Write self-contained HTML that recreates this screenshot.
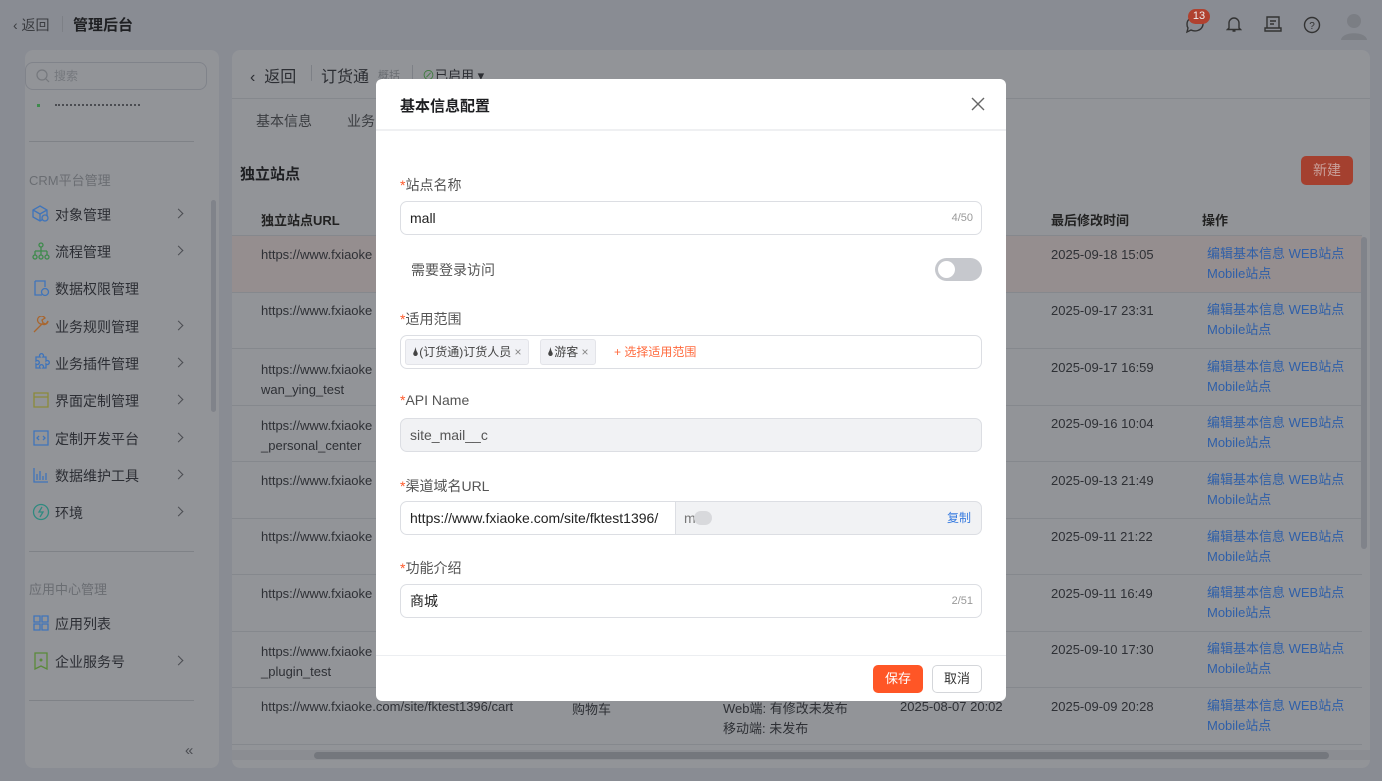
<!DOCTYPE html>
<html><head><meta charset="utf-8"><style>
*{box-sizing:border-box;margin:0;padding:0}
body{width:1382px;height:781px;overflow:hidden;background:#898c93;font-family:"Liberation Sans","Noto Sans CJK SC",sans-serif;position:relative;color:#2b2d31}
.a{position:absolute;white-space:nowrap}
.side{left:25px;top:50px;width:194px;height:718px;background:#929498;border-radius:8px}
.main{left:232px;top:50px;width:1138px;height:718px;background:#929498;border-radius:8px;overflow:hidden}
.mi{font-size:14px;color:#2c2e34}
.chev{width:7px;height:7px;border-top:1.5px solid #4b4d52;border-right:1.5px solid #4b4d52;transform:rotate(45deg)}
.row{left:0;width:1130px;border-top:1px solid #85888d;height:57px}
.t{font-size:13px;color:#2e3035}
.op{font-size:13px;color:#2f5fa8;line-height:20px}
.modal{left:376px;top:79px;width:630px;height:622px;background:#fff;border-radius:6px;overflow:hidden}
.lbl{font-size:14px;color:#555}
.lbl b{color:#ff5a2b;font-weight:normal}
.inp{left:24px;width:582px;height:34px;border:1px solid #dcdee3;border-radius:7px;font-size:14px;color:#222;padding:0 9px;line-height:32px}
</style></head><body>
<!-- top bar -->
<div class="a" style="left:13px;top:15px;font-size:14px;color:#3a3c40">‹ 返回</div>
<div class="a" style="left:62px;top:16px;width:1px;height:16px;background:#7d8086"></div>
<div class="a" style="left:73px;top:14px;font-size:15px;font-weight:bold;color:#1e1f22">管理后台</div>
<svg class="a" style="left:1184px;top:14px" width="22" height="20"><path d="M3 10a8 7 0 1 1 4 6l-4 2 1-4a7 7 0 0 1-1-4z" fill="none" stroke="#333" stroke-width="1.4"/></svg>
<div class="a" style="left:1188px;top:9px;width:22px;height:15px;border-radius:8px;background:#b0412f;color:#eee;font-size:11px;text-align:center;line-height:15px">13</div>
<svg class="a" style="left:1226px;top:15px" width="16" height="18"><path d="M3 13V8a5 5 0 0 1 10 0v5l1.5 1.5h-13zM6.5 16h3" fill="none" stroke="#333" stroke-width="1.4"/></svg>
<svg class="a" style="left:1264px;top:15px" width="18" height="18"><path d="M3 2h12v11H3zM6 6h6M6 9h4M1 13h16v3H1z" fill="none" stroke="#333" stroke-width="1.4"/></svg>
<svg class="a" style="left:1303px;top:16px" width="18" height="18"><circle cx="9" cy="9" r="7.5" fill="none" stroke="#333" stroke-width="1.4"/><text x="9" y="13" font-size="10" text-anchor="middle" fill="#333" font-family="Liberation Sans">?</text></svg>
<svg class="a" style="left:1338px;top:10px" width="32" height="32"><circle cx="16" cy="11" r="7" fill="#7b7e84"/><path d="M3 30c1-9 25-9 26 0z" fill="#7b7e84"/></svg>

<!-- sidebar -->
<div class="a side">
 <div class="a" style="left:0;top:12px;width:182px;height:28px;border:1px solid #80838a;border-radius:8px;font-size:12px;color:#75787d;line-height:26px;padding-left:28px">搜索</div>
 <svg class="a" style="left:11px;top:19px" width="14" height="14"><circle cx="6" cy="6" r="5" fill="none" stroke="#75787d" stroke-width="1.2"/><path d="M10 10l3 3" stroke="#75787d" stroke-width="1.2"/></svg>
 <div class="a" style="left:12px;top:54px;width:3px;height:3px;background:#3e8a4c"></div>
 <div class="a" style="left:30px;top:54px;width:85px;height:2px;border-top:2px dotted #4b4d52"></div>
 <div class="a" style="left:4px;top:91px;width:165px;height:1px;background:#7f8287"></div>
 <div class="a" style="left:4px;top:120px;font-size:13px;color:#6a6d72">CRM平台管理</div>
 <svg class="a" style="left:7px;top:155px" width="18" height="18"><path d="M8 1l7 4v7l-7 4-7-4V5zM1 5l7 4 7-4M8 9v7" fill="none" stroke="#3f74ba" stroke-width="1.3"/><circle cx="13" cy="13" r="3" fill="#929498" stroke="#3f74ba" stroke-width="1.3"/></svg><div class="a mi" style="left:30px;top:155px">对象管理</div><div class="a chev" style="left:150px;top:160px"></div>
 <svg class="a" style="left:7px;top:192px" width="18" height="18"><circle cx="9" cy="3" r="2" fill="none" stroke="#3e8a4c" stroke-width="1.3"/><path d="M9 5v4M3 9h12M3 9v4M9 9v4M15 9v4" fill="none" stroke="#3e8a4c" stroke-width="1.3"/><circle cx="3" cy="15" r="2" fill="none" stroke="#3e8a4c" stroke-width="1.3"/><circle cx="9" cy="15" r="2" fill="none" stroke="#3e8a4c" stroke-width="1.3"/><circle cx="15" cy="15" r="2" fill="none" stroke="#3e8a4c" stroke-width="1.3"/></svg><div class="a mi" style="left:30px;top:192px">流程管理</div><div class="a chev" style="left:150px;top:197px"></div>
 <svg class="a" style="left:7px;top:229px" width="18" height="18"><path d="M3 2h10v6M3 2v14h7" fill="none" stroke="#3f74ba" stroke-width="1.3"/><circle cx="13" cy="13" r="3.5" fill="none" stroke="#3f74ba" stroke-width="1.3"/></svg><div class="a mi" style="left:30px;top:229px">数据权限管理</div>
 <svg class="a" style="left:7px;top:266px" width="18" height="18"><path d="M2 16l8-8a4 4 0 1 1 3-6l-3 2 1 3 3 1 2-3a4 4 0 0 1-6 3" fill="none" stroke="#a8662f" stroke-width="1.3"/></svg><div class="a mi" style="left:30px;top:267px">业务规则管理</div><div class="a chev" style="left:150px;top:272px"></div>
 <svg class="a" style="left:7px;top:303px" width="18" height="18"><path d="M4 4h4a2 2 0 1 1 3 0h3v4a2 2 0 1 1 0 3v4H11a2 2 0 1 0-3 0H4v-4a2 2 0 1 0 0-3z" fill="none" stroke="#3f74ba" stroke-width="1.3"/></svg><div class="a mi" style="left:30px;top:304px">业务插件管理</div><div class="a chev" style="left:150px;top:309px"></div>
 <svg class="a" style="left:7px;top:341px" width="18" height="18"><path d="M2 2h14v14H2zM2 6h14" fill="none" stroke="#8b8a3a" stroke-width="1.3"/></svg><div class="a mi" style="left:30px;top:341px">界面定制管理</div><div class="a chev" style="left:150px;top:346px"></div>
 <svg class="a" style="left:7px;top:379px" width="18" height="18"><path d="M2 2h14v14H2zM7 7l-2 2 2 2M11 7l2 2-2 2" fill="none" stroke="#3f74ba" stroke-width="1.3"/></svg><div class="a mi" style="left:30px;top:379px">定制开发平台</div><div class="a chev" style="left:150px;top:384px"></div>
 <svg class="a" style="left:7px;top:416px" width="18" height="18"><path d="M2 2v14h14M5 8v6M8 5v9M11 10v4M14 7v7" fill="none" stroke="#3f74ba" stroke-width="1.3"/></svg><div class="a mi" style="left:30px;top:416px">数据维护工具</div><div class="a chev" style="left:150px;top:421px"></div>
 <svg class="a" style="left:7px;top:453px" width="18" height="18"><circle cx="9" cy="9" r="7.5" fill="none" stroke="#2f8a80" stroke-width="1.3"/><path d="M10 4l-3 5h4l-3 5" fill="none" stroke="#2f8a80" stroke-width="1.3"/></svg><div class="a mi" style="left:30px;top:453px">环境</div><div class="a chev" style="left:150px;top:458px"></div>
 <div class="a" style="left:4px;top:501px;width:165px;height:1px;background:#7f8287"></div>
 <div class="a" style="left:4px;top:529px;font-size:13px;color:#6a6d72">应用中心管理</div>
 <svg class="a" style="left:8px;top:565px" width="16" height="16"><path d="M1 1h6v6H1zM9 1h6v6H9zM1 9h6v6H1zM9 9h6v6H9z" fill="none" stroke="#3f74ba" stroke-width="1.3"/></svg><div class="a mi" style="left:30px;top:564px">应用列表</div>
 <svg class="a" style="left:8px;top:602px" width="16" height="18"><path d="M2 1h12v16l-6-3-6 3z" fill="none" stroke="#5a8a3a" stroke-width="1.3"/><circle cx="8" cy="8" r="1.5" fill="#5a8a3a"/></svg><div class="a mi" style="left:30px;top:602px">企业服务号</div><div class="a chev" style="left:150px;top:607px"></div>
 <div class="a" style="left:4px;top:650px;width:165px;height:1px;background:#7f8287"></div>
 <div class="a" style="left:160px;top:692px;font-size:15px;color:#4b4d52">«</div>
 <div class="a" style="left:186px;top:150px;width:5px;height:212px;background:#80838a;border-radius:3px"></div>
</div>

<!-- main -->
<div class="a main">
 <div class="a" style="left:18px;top:13px;font-size:16px;color:#2c2e33">‹&nbsp; 返回</div>
 <div class="a" style="left:79px;top:15px;width:1px;height:16px;background:#7d8086"></div>
 <div class="a" style="left:89px;top:13px;font-size:16px;color:#2c2e33">订货通</div>
 <div class="a" style="left:146px;top:17px;font-size:11px;color:#6a6d72">概括</div>
 <div class="a" style="left:180px;top:15px;width:1px;height:16px;background:#7d8086"></div>
 <div class="a" style="left:190px;top:15px;font-size:13px;color:#2c2e33"><span style="color:#3e7a3e">⊘</span>已启用 ▾</div>
 <div class="a" style="left:0;top:48px;width:1138px;height:1px;background:#85888d"></div>
 <div class="a" style="left:24px;top:61px;font-size:14px;color:#3a3c40">基本信息</div>
 <div class="a" style="left:115px;top:61px;font-size:14px;color:#3a3c40">业务</div>
 <div class="a" style="left:8px;top:113px;font-size:15px;font-weight:bold;color:#1e1f22">独立站点</div>
 <div class="a" style="left:1069px;top:106px;width:52px;height:29px;background:#a4402f;border-radius:5px;color:#c9a09a;font-size:14px;text-align:center;line-height:29px">新建</div>
 <div class="a" style="left:29px;top:160px;font-size:13px;font-weight:bold;color:#222">独立站点URL</div>
 <div class="a" style="left:819px;top:160px;font-size:13px;font-weight:bold;color:#222">最后修改时间</div>
 <div class="a" style="left:970px;top:160px;font-size:13px;font-weight:bold;color:#222">操作</div>
 <div class="a row" style="top:185px;background:#958e8f"></div>
 <div class="a row" style="top:242px"></div><div class="a row" style="top:298px"></div><div class="a row" style="top:355px"></div><div class="a row" style="top:411px"></div><div class="a row" style="top:468px"></div><div class="a row" style="top:524px"></div><div class="a row" style="top:581px"></div><div class="a row" style="top:637px"></div><div class="a row" style="top:694px"></div>
 <div class="a t" style="left:29px;top:197px">https://www.fxiaoke</div>
 <div class="a t" style="left:29px;top:253px">https://www.fxiaoke</div>
 <div class="a t" style="left:29px;top:310px;line-height:20px">https://www.fxiaoke<br>wan_ying_test</div>
 <div class="a t" style="left:29px;top:366px;line-height:20px">https://www.fxiaoke<br>_personal_center</div>
 <div class="a t" style="left:29px;top:423px">https://www.fxiaoke</div>
 <div class="a t" style="left:29px;top:479px">https://www.fxiaoke</div>
 <div class="a t" style="left:29px;top:536px">https://www.fxiaoke</div>
 <div class="a t" style="left:29px;top:592px;line-height:20px">https://www.fxiaoke<br>_plugin_test</div>
 <div class="a t" style="left:29px;top:649px">https://www.fxiaoke.com/site/fktest1396/cart</div>
 <div class="a t" style="left:340px;top:649px">购物车</div>
 <div class="a t" style="left:491px;top:649px;line-height:20px">Web端: 有修改未发布<br>移动端: 未发布</div>
 <div class="a t" style="left:668px;top:649px">2025-08-07 20:02</div>
 <div class="a t" style="left:819px;top:197px">2025-09-18 15:05</div>
 <div class="a t" style="left:819px;top:253px">2025-09-17 23:31</div>
 <div class="a t" style="left:819px;top:310px">2025-09-17 16:59</div>
 <div class="a t" style="left:819px;top:366px">2025-09-16 10:04</div>
 <div class="a t" style="left:819px;top:423px">2025-09-13 21:49</div>
 <div class="a t" style="left:819px;top:479px">2025-09-11 21:22</div>
 <div class="a t" style="left:819px;top:536px">2025-09-11 16:49</div>
 <div class="a t" style="left:819px;top:592px">2025-09-10 17:30</div>
 <div class="a t" style="left:819px;top:649px">2025-09-09 20:28</div>
 <div class="a op" style="left:975px;top:194px">编辑基本信息 WEB站点<br>Mobile站点</div>
 <div class="a op" style="left:975px;top:250px">编辑基本信息 WEB站点<br>Mobile站点</div>
 <div class="a op" style="left:975px;top:307px">编辑基本信息 WEB站点<br>Mobile站点</div>
 <div class="a op" style="left:975px;top:363px">编辑基本信息 WEB站点<br>Mobile站点</div>
 <div class="a op" style="left:975px;top:420px">编辑基本信息 WEB站点<br>Mobile站点</div>
 <div class="a op" style="left:975px;top:477px">编辑基本信息 WEB站点<br>Mobile站点</div>
 <div class="a op" style="left:975px;top:533px">编辑基本信息 WEB站点<br>Mobile站点</div>
 <div class="a op" style="left:975px;top:589px">编辑基本信息 WEB站点<br>Mobile站点</div>
 <div class="a op" style="left:975px;top:646px">编辑基本信息 WEB站点<br>Mobile站点</div>
 <div class="a" style="left:1129px;top:187px;width:6px;height:312px;background:#80838a;border-radius:3px"></div>
 <div class="a" style="left:0;top:700px;width:1138px;height:10px;background:#8b8d92"></div>
 <div class="a" style="left:82px;top:702px;width:1015px;height:7px;background:#74777d;border-radius:4px"></div>
</div>

<!-- modal -->
<div class="a modal">
 <div class="a" style="left:24px;top:16px;font-size:15px;font-weight:bold;color:#1e1f22">基本信息配置</div>
 <svg class="a" style="left:595px;top:18px" width="14" height="14"><path d="M1 1l12 12M13 1L1 13" stroke="#666" stroke-width="1.4"/></svg>
 <div class="a" style="left:0;top:50px;width:630px;height:2px;background:#eff0f2"></div>
 <div class="a lbl" style="left:24px;top:96px"><b>*</b>站点名称</div>
 <div class="a inp" style="top:122px">mall<span style="position:absolute;right:8px;font-size:11px;color:#999">4/50</span></div>
 <div class="a lbl" style="left:35px;top:181px">需要登录访问</div>
 <div class="a" style="left:559px;top:179px;width:47px;height:23px;border-radius:12px;background:#c6c8cd"></div>
 <div class="a" style="left:562px;top:182px;width:17px;height:17px;border-radius:50%;background:#fff"></div>
 <div class="a lbl" style="left:24px;top:230px"><b>*</b>适用范围</div>
 <div class="a inp" style="top:256px;padding:3px"></div>
 <div class="a" style="left:29px;top:260px;height:26px;padding:0 6px;background:#f1f2f6;border:1px solid #e3e4e9;border-radius:3px;font-size:12px;color:#444;line-height:24px">🌢(订货通)订货人员 <span style="color:#888">×</span></div>
 <div class="a" style="left:164px;top:260px;height:26px;padding:0 6px;background:#f1f2f6;border:1px solid #e3e4e9;border-radius:3px;font-size:12px;color:#444;line-height:24px">🌢游客 <span style="color:#888">×</span></div>
 <div class="a" style="left:238px;top:264px;font-size:12px;color:#ff6a3d">+ 选择适用范围</div>
 <div class="a lbl" style="left:24px;top:313px"><b>*</b>API Name</div>
 <div class="a inp" style="top:339px;background:#f1f2f4;color:#555">site_mail__c</div>
 <div class="a lbl" style="left:24px;top:397px"><b>*</b>渠道域名URL</div>
 <div class="a inp" style="top:422px;background:linear-gradient(90deg,#fff 0,#fff 274px,#dcdee3 274px,#dcdee3 275px,#f1f2f4 275px)">https://www.fxiaoke.com/site/fktest1396/<span style="position:absolute;left:283px;color:#777">m</span><span style="position:absolute;left:293px;top:9px;width:18px;height:14px;border-radius:7px;background:#d8d9dc"></span><span style="position:absolute;right:10px;font-size:12px;color:#3a7de0">复制</span></div>
 <div class="a lbl" style="left:24px;top:479px"><b>*</b>功能介绍</div>
 <div class="a inp" style="top:505px">商城<span style="position:absolute;right:8px;font-size:11px;color:#999">2/51</span></div>
 <div class="a" style="left:0;top:576px;width:630px;height:1px;background:#eceef1"></div>
 <div class="a" style="left:497px;top:586px;width:50px;height:28px;border-radius:5px;background:#ff5626;color:#fff;font-size:13px;text-align:center;line-height:28px">保存</div>
 <div class="a" style="left:556px;top:586px;width:50px;height:28px;border-radius:5px;border:1px solid #d4d6da;color:#333;font-size:13px;text-align:center;line-height:26px">取消</div>
</div>
</body></html>
